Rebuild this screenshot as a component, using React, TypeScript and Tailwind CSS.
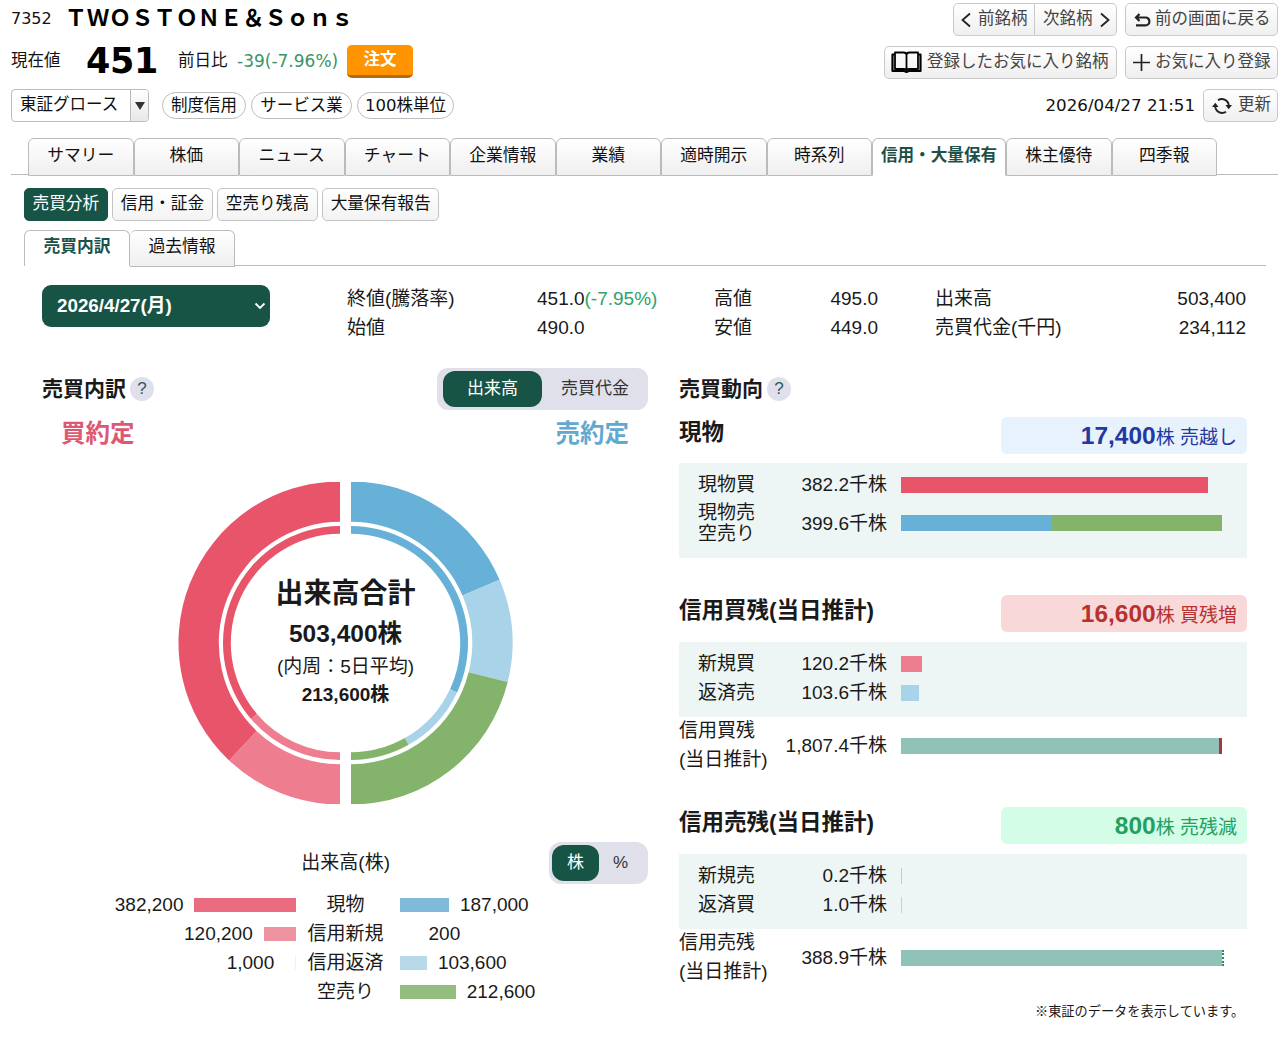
import { useState } from 'react'
import type { ReactNode } from 'react'
import { clsx } from 'clsx'

const mainTabs = ['サマリー', '株価', 'ニュース', 'チャート', '企業情報', '業績', '適時開示', '時系列', '信用・大量保有', '株主優待', '四季報']
const subMenus = ['売買分析', '信用・証金', '空売り残高', '大量保有報告']

const RED = '#e85469'
const PINK = '#ee7d8f'
const BLUE = '#67b0d7'
const LIGHT_BLUE = '#a9d3e8'
const GREEN = '#84b46c'
const TEAL = '#90c2b7'

const outerBuy = [
  { value: 382200, color: RED },
  { value: 121200, color: PINK },
]
const outerSell = [
  { value: 187200, color: BLUE },
  { value: 103600, color: LIGHT_BLUE },
  { value: 212600, color: GREEN },
]
const innerBuy = [
  { value: 130.5, color: RED },
  { value: 49.5, color: PINK },
]
const innerSell = [
  { value: 115, color: BLUE },
  { value: 35.5, color: LIGHT_BLUE },
  { value: 29.5, color: GREEN },
]

const breakdown = [
  { label: '現物', buy: 382200, buyColor: '#eb6b80', sell: 187000, sellColor: '#7fbadb' },
  { label: '信用新規', buy: 120200, buyColor: '#ee93a0', sell: 200, sellColor: '#f4f9fc' },
  { label: '信用返済', buy: 1000, buyColor: '#f3f0f1', sell: 103600, sellColor: '#b7d9ea' },
  { label: '空売り', buy: 0, buyColor: '#fff', sell: 212600, sellColor: '#94be80' },
]

type Slice = { value: number; color: string }

function ringPath(cx: number, cy: number, r1: number, r2: number, from: number, to: number, side: number) {
  const point = (r: number, deg: number) => {
    const rad = (deg * Math.PI) / 180
    return `${(cx + side * r * Math.sin(rad)).toFixed(2)} ${(cy - r * Math.cos(rad)).toFixed(2)}`
  }
  const sweep = side > 0 ? 1 : 0
  return `M${point(r1, from)} A${r1} ${r1} 0 0 ${sweep} ${point(r1, to)} L${point(r2, to)} A${r2} ${r2} 0 0 ${1 - sweep} ${point(r2, from)} Z`
}

function HalfRing({ slices, side, outer, inner }: { slices: Slice[]; side: number; outer: number; inner: number }) {
  const total = slices.reduce((sum, s) => sum + s.value, 0)
  const cx = side > 0 ? 173 : 162
  let angle = 0
  return (
    <>
      {slices.map((s) => {
        const from = angle
        angle += (s.value / total) * 180
        return <path key={s.color} d={ringPath(cx, 161, outer, inner, from, angle, side)} fill={s.color} />
      })}
    </>
  )
}

function HeaderButton({ children, className }: { children: ReactNode; className?: string }) {
  return (
    <button
      className={clsx(
        'flex h-[33px] items-center rounded-[5px] border border-[#c9c9c9] bg-linear-to-b from-white to-[#efefef] text-[16.5px] whitespace-nowrap text-[#444]',
        className,
      )}
    >
      {children}
    </button>
  )
}

function Chevron({ right }: { right?: boolean }) {
  return (
    <svg width="10" height="16" viewBox="0 0 10 16" fill="none" stroke="#222" strokeWidth="1.8">
      <path d={right ? 'M1 1.5 8.5 8 1 14.5' : 'M9 1.5 1.5 8 9 14.5'} />
    </svg>
  )
}

function HelpMark() {
  return (
    <span className="flex size-6 items-center justify-center rounded-full bg-[#dfe0ec] text-[17px] text-[#2b5a55]">?</span>
  )
}

function Toggle({ items, widths, radius }: { items: string[]; widths: string[]; radius: string }) {
  const [selected, setSelected] = useState(0)
  return (
    <div className={clsx('flex h-[42px] items-center bg-[#e0e0eb]', radius)}>
      {items.map((item, i) => (
        <button
          key={item}
          onClick={() => setSelected(i)}
          className={clsx('h-9 rounded-[12px] text-[17px]', widths[i], selected === i ? 'bg-[#185446] text-white' : 'text-[#333]')}
        >
          {item}
        </button>
      ))}
    </div>
  )
}

function PageHeader() {
  return (
    <header className="flex h-[122px] justify-between pr-[2px] pl-[11px] font-['DejaVu_Sans','Noto_Sans_CJK_JP',sans-serif] text-[16.5px] text-[#111]">
      <div>
        <div className="flex h-9 items-center gap-[13px]">
          <span className="pt-[2px] text-[16px]">7352</span>
          <h1 className="text-[22.2px] leading-9 font-bold text-black">ＴＷＯＳＴＯＮＥ＆Ｓｏｎｓ</h1>
        </div>
        <div className="mt-[9px] flex h-[33px] items-center">
          <span className="w-[75px]">現在値</span>
          <span className="w-[92px] text-[35px] leading-[33px] font-bold tracking-[-0.3px] text-black">451</span>
          <span className="w-[59px]">前日比</span>
          <span className="w-[110px] text-[17px] text-[#3a9467]">-39(-7.96%)</span>
          <button className="h-[33px] w-[66px] rounded-[5px] border-b-[3px] border-[#b8690c] bg-[#ff9300] text-[16.5px] font-bold text-white">注文</button>
        </div>
        <div className="mt-[11px] flex h-[33px] items-center">
          <div className="mr-[13px] flex h-[33px] w-[138px] overflow-hidden rounded-[4px] border border-[#bbb]">
            <span className="w-[118px] pl-[8px] leading-[30px]">東証グロース</span>
            <span className="flex flex-1 items-center justify-center border-l border-[#bbb] bg-linear-to-b from-white to-[#e8e8e8]">
              <svg width="10" height="8" viewBox="0 0 10 8"><path d="M0 0h10L5 8z" fill="#333" /></svg>
            </span>
          </div>
          <div className="flex gap-[5px] text-center leading-[25px]">
            <span className="h-[27px] w-[84px] rounded-full border border-[#bbb]">制度信用</span>
            <span className="h-[27px] w-[101px] rounded-full border border-[#bbb]">サービス業</span>
            <span className="h-[27px] w-[97px] rounded-full border border-[#bbb]">100株単位</span>
          </div>
        </div>
      </div>

      <div className="flex flex-col items-end pt-[3px]">
        <div className="flex gap-2">
          <div className="flex">
            <HeaderButton className="w-[82px] gap-[7px] rounded-r-none pl-[7px]"><Chevron />前銘柄</HeaderButton>
            <HeaderButton className="w-[82px] gap-[7px] rounded-l-none border-l-0 pl-[8px]">次銘柄<Chevron right /></HeaderButton>
          </div>
          <HeaderButton className="w-[153px] gap-[4px] pl-[8px]">
            <svg width="17" height="14" viewBox="0 0 17 14" fill="none" stroke="#222" strokeWidth="2.2">
              <path d="M5.5 1 2 4.5 5.5 8M2 4.5h9.5a3.9 3.9 0 0 1 0 7.8H2" />
            </svg>
            前の画面に戻る
          </HeaderButton>
        </div>
        <div className="mt-[10px] flex gap-2">
          <HeaderButton className="w-[233px] gap-[5px] pl-[6px]">
            <svg width="31" height="23" viewBox="0 0 31 23" fill="none" stroke="#000" strokeWidth="2.2" strokeLinejoin="round">
              <path d="M4 1.5h8.5Q15.5 1.5 15.5 4v16Q15.5 18 12.5 18H4zM27 1.5h-8.5Q15.5 1.5 15.5 4v16q0-2 3-2H27z" strokeWidth="1.8" />
              <path d="M4 3.5H1.5v16.5h12q2 1.8 4 0h12V3.5H27" />
            </svg>
            登録したお気に入り銘柄
          </HeaderButton>
          <HeaderButton className="w-[153px] gap-[5px] pl-[7px]">
            <svg width="17" height="17" viewBox="0 0 17 17" stroke="#222" strokeWidth="1.7"><path d="M8.5 0v17M0 8.5h17" /></svg>
            お気に入り登録
          </HeaderButton>
        </div>
        <div className="mt-[10px] flex items-center gap-2">
          <span className="text-[16.7px]">2026/04/27 21:51</span>
          <HeaderButton className="w-[75px] gap-[6px] pl-[8px]">
            <svg width="20" height="18" viewBox="0 0 20 18" fill="none" stroke="#222" strokeWidth="1.9">
              <path d="M6 3.2A7 7 0 0 1 16.8 9M14 14.8A7 7 0 0 1 3.2 9" />
              <path d="M13.4 8h6.6l-3.3 4.2zM0 10h6.6L3.3 5.8z" fill="#222" stroke="none" />
            </svg>
            更新
          </HeaderButton>
        </div>
      </div>
    </header>
  )
}

function Navigation() {
  return (
    <nav className="text-[16.8px] text-[#111]">
      <div className="mt-4 mr-[2px] ml-[11px] flex h-[37px] border-b border-[#bbb] pl-[17px]">
        {mainTabs.map((tab) => {
          const active = tab === '信用・大量保有'
          return (
            <button
              key={tab}
              className={clsx(
                'h-[38px] rounded-t-[6px] border border-[#bbb] pb-[2px] whitespace-nowrap',
                active
                  ? 'w-[134px] border-b-white bg-white text-[16.6px] font-bold text-[#1b5148]'
                  : 'w-[105.5px] bg-linear-to-b from-white to-[#efefef]',
              )}
            >
              {tab}
            </button>
          )
        })}
      </div>
      <div className="mt-[13px] ml-6 flex h-[33px] gap-[4.5px]">
        {subMenus.map((menu, i) => (
          <button
            key={menu}
            className={clsx(
              'rounded-[5px] border px-[7.5px] pb-[2px] text-[16.7px]',
              i === 0 ? 'border-[#185446] bg-[#185446] text-white' : 'border-[#c4c4c4] bg-linear-to-b from-white to-[#f3f3f3]',
            )}
          >
            {menu}
          </button>
        ))}
      </div>
      <div className="mt-[9px] mr-[14px] ml-6 flex h-9 border-b border-[#bbb]">
        <button className="h-9 w-[106px] rounded-t-[6px] border border-b-0 border-[#bbb] bg-white pb-[3px] font-bold text-[#1b5148]">売買内訳</button>
        <button className="h-[37px] w-[105px] rounded-t-[6px] border border-l-0 border-[#bbb] bg-linear-to-b from-white to-[#efefef] pb-[3px]">過去情報</button>
      </div>
    </nav>
  )
}

function PriceSummary() {
  return (
    <section className="flex h-[60px] pt-[2px] pl-[42px]">
      <button className="mt-[17px] flex h-[42px] w-[228px] shrink-0 items-center justify-between rounded-[9px] bg-[#185446] pr-[4px] pl-[15px] text-[18.8px] font-bold text-white">
        2026/4/27(月)
        <svg width="12" height="8" viewBox="0 0 12 8" fill="none" stroke="#fff" strokeWidth="1.8"><path d="m1.5 1.5 4.5 4.5 4.5-4.5" /></svg>
      </button>
      <dl className="mt-[17px] ml-[77px] grid h-[57px] shrink-0 grid-cols-[190px_177px_87px_77px_57px_150px_162px] text-[19px] leading-[28.5px]">
        <dt>終値(騰落率)</dt>
        <dd>451.0<span className="text-[#2fa267]">(-7.95%)</span></dd>
        <dt>高値</dt>
        <dd className="text-right">495.0</dd>
        <dt className="col-span-2 pl-[57px]">出来高</dt>
        <dd className="pr-[1px] text-right">503,400</dd>
        <dt>始値</dt>
        <dd>490.0</dd>
        <dt>安値</dt>
        <dd className="text-right">449.0</dd>
        <dt className="col-span-2 pl-[57px]">売買代金(千円)</dt>
        <dd className="pr-[1px] text-right">234,112</dd>
      </dl>
    </section>
  )
}

function Donut() {
  return (
    <div className="relative ml-[136px] h-[322px] w-[335px]">
      <svg width="335" height="322" viewBox="0 0 335 322">
        <HalfRing slices={outerBuy} side={-1} outer={161.5} inner={121.2} />
        <HalfRing slices={outerSell} side={1} outer={161.5} inner={121.2} />
        <HalfRing slices={innerBuy} side={-1} outer={117} inner={109.2} />
        <HalfRing slices={innerSell} side={1} outer={117} inner={109.2} />
      </svg>
      <div className="absolute inset-x-0 top-[91px] text-center">
        <p className="text-[28px] leading-[42px] font-bold">出来高合計</p>
        <p className="text-[24.5px] leading-[37px] font-bold">503,400株</p>
        <p className="text-[19px] leading-[29px]">(内周：5日平均)</p>
        <p className="text-[19px] leading-[28px] font-bold">213,600株</p>
      </div>
    </div>
  )
}

function Breakdown() {
  // 棒の長さは株数に比例
  const barWidth = (value: number) => value * 0.0002644
  return (
    <section className="w-[606px]">
      <div className="flex h-[42px] items-center justify-between">
        <h2 className="flex items-center gap-[4px] text-[21px] font-bold">売買内訳 <span className="font-normal"><HelpMark /></span></h2>
        <Toggle items={['出来高', '売買代金']} widths={['w-[99px] ml-[6px]', 'w-[106px]']} radius="rounded-[11px]" />
      </div>
      <div className="flex h-[48px] items-center justify-between pr-[19px] pl-[19px] text-[24.5px] font-bold">
        <span className="text-[#dd5873]">買約定</span>
        <span className="text-[#62a9cf]">売約定</span>
      </div>
      <div className="mt-6">
        <Donut />
      </div>
      <div className="mt-[38px] flex h-[42px] items-center justify-end">
        <span className="mr-[159px] text-[19px]">出来高(株)</span>
        <Toggle items={['株', '%']} widths={['w-[47px] ml-[3px]', 'w-[49px] pr-[6px]']} radius="rounded-[12px]" />
      </div>
      <div className="mt-[7px] text-[19px]">
        {breakdown.map((row) => (
          <div key={row.label} className="flex h-[28.8px] items-center">
            <div className={clsx('flex w-[253.5px] items-center justify-end', row.buy < 5000 ? 'gap-[21px]' : 'gap-[11px]')}>
              {row.buy > 0 && (
                <>
                  <span>{row.buy.toLocaleString('en-US')}</span>
                  <span className="h-[14px]" style={{ width: barWidth(row.buy), backgroundColor: row.buyColor }} />
                </>
              )}
            </div>
            <span className="w-[104px] shrink-0 pr-[4px] text-center">{row.label}</span>
            <div className={clsx('flex items-center', row.sell < 5000 ? 'gap-[29px]' : 'gap-[11px]')}>
              <span className="h-[14px]" style={{ width: barWidth(row.sell), backgroundColor: row.sellColor }} />
              <span>{row.sell.toLocaleString('en-US')}</span>
            </div>
          </div>
        ))}
      </div>
    </section>
  )
}

function TrendHeading({ title, value, text, color }: { title: string; value: string; text: string; color: string }) {
  return (
    <div className="flex h-[37px] items-center justify-between">
      <h3 className="pb-[5px] text-[22.5px] leading-8 font-bold">{title}</h3>
      <div className={clsx('flex h-[37px] w-[246px] items-baseline justify-end rounded-[6px] pr-[10px] leading-[37px]', color)}>
        <span className="text-[24.5px] font-bold">{value}</span>
        <span className="text-[19px]">{text}</span>
      </div>
    </div>
  )
}

function BarRow({ label, value, bars, total }: { label: ReactNode; value: string; bars: { width: number; color: string }[]; total?: boolean }) {
  return (
    <div className="flex items-center text-[19px]">
      <span className={clsx('shrink-0', total ? 'w-[90px] leading-[28.5px]' : 'w-[71px] leading-[21px]')}>{label}</span>
      <span className="w-[118px] shrink-0 text-right leading-[29px]">{value}</span>
      <div className="ml-[14px] flex h-4">
        {bars.map((bar) => (
          <span key={bar.color} className="h-4" style={{ width: bar.width, backgroundColor: bar.color }} />
        ))}
        {total && value.startsWith('388') && <span className="h-4 border-r-2 border-dotted border-[#2b8a5c]" />}
      </div>
    </div>
  )
}

function Trend() {
  return (
    <section className="w-[568px]">
      <h2 className="flex h-[42px] items-center gap-[4px] text-[21px] font-bold">売買動向 <span className="font-normal"><HelpMark /></span></h2>
      <div className="mt-[7px]">
        <TrendHeading title="現物" value="17,400" text="株 売越し" color="bg-[#e7f2fd] text-[#2338a0]" />
        <div className="mt-[9px] flex h-[95px] flex-col bg-[#edf6f4] pt-[7px] pl-[19px]">
          <BarRow label="現物買" value="382.2千株" bars={[{ width: 307, color: RED }]} />
          <div className="mt-[3px]">
            <BarRow label={<>現物売<br />空売り</>} value="399.6千株" bars={[{ width: 151, color: BLUE }, { width: 170, color: GREEN }]} />
          </div>
        </div>
      </div>
      <div className="mt-[37px]">
        <TrendHeading title="信用買残(当日推計)" value="16,600" text="株 買残増" color="bg-[#f9d8da] text-[#b7322f]" />
        <div className="mt-[10px] h-[75px] bg-[#edf6f4] pt-[7px] pl-[19px]">
          <BarRow label="新規買" value="120.2千株" bars={[{ width: 21, color: PINK }]} />
          <BarRow label="返済売" value="103.6千株" bars={[{ width: 18, color: LIGHT_BLUE }]} />
        </div>
        <BarRow total label={<>信用買残<br />(当日推計)</>} value="1,807.4千株" bars={[{ width: 318, color: TEAL }, { width: 3, color: '#a7383c' }]} />
      </div>
      <div className="mt-[33px]">
        <TrendHeading title="信用売残(当日推計)" value="800" text="株 売残減" color="bg-[#d3fde6] text-[#21a060]" />
        <div className="mt-[10px] h-[75px] bg-[#edf6f4] pt-[7px] pl-[19px]">
          <BarRow label="新規売" value="0.2千株" bars={[{ width: 1, color: '#a5d8d8' }]} />
          <BarRow label="返済買" value="1.0千株" bars={[{ width: 1, color: '#f1bcc8' }]} />
        </div>
        <BarRow total label={<>信用売残<br />(当日推計)</>} value="388.9千株" bars={[{ width: 321, color: TEAL }]} />
      </div>
      <p className="mt-[16px] pl-[356px] text-[13.2px] leading-5 whitespace-nowrap">※東証のデータを表示しています。</p>
    </section>
  )
}

export default function App() {
  return (
    <div className="h-[1038px] w-[1280px] overflow-hidden bg-white font-['Liberation_Sans','Noto_Sans_CJK_JP',sans-serif] text-[#1a1a1a]">
      <PageHeader />
      <Navigation />
      <PriceSummary />
      <main className="mt-[42px] flex gap-[31px] pl-[42px]">
        <Breakdown />
        <Trend />
      </main>
    </div>
  )
}
